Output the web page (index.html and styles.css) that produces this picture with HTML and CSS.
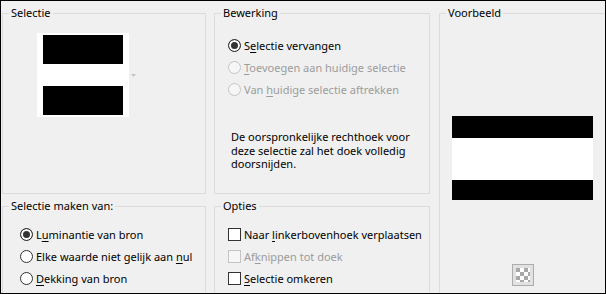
FILE: index.html
```html
<!DOCTYPE html>
<html>
<head>
    <title>Selectie uit masker</title>
    <link rel="stylesheet" href="styles.css">
</head>
<body>
    <div class="dialog">
        <fieldset class="group">
            <legend>Selectie</legend>
            <div class="source">
                <div class="thumb">
                    <div class="bar"></div>
                    <div class="bar"></div>
                </div>
                <svg class="drop" width="5" height="3" viewBox="0 0 5 3"><path d="M0 0h5L2.5 3z" fill="#c4c4c4"/></svg>
            </div>
        </fieldset>

        <fieldset class="group">
            <legend>Bewerking</legend>
            <div class="list list-mode">
                <label class="opt"><input type="radio" name="mode" checked><span>S<u>e</u>lectie vervangen</span></label>
                <label class="opt off"><input type="radio" name="mode" disabled><span><u>T</u>oevoegen aan huidige selectie</span></label>
                <label class="opt off"><input type="radio" name="mode" disabled><span>Van <u>h</u>uidige selectie aftrekken</span></label>
            </div>
            <p class="note">De oorspronkelijke rechthoek voor deze selectie zal het doek volledig doorsnijden.</p>
        </fieldset>

        <fieldset class="group preview">
            <legend>Voorbeeld</legend>
            <div class="preview-body">
                <div class="preview-img">
                    <div class="stripe top"></div>
                    <div class="stripe mid"></div>
                    <div class="stripe bottom"></div>
                </div>
                <div class="checker-btn"><div class="checker"></div></div>
            </div>
        </fieldset>

        <fieldset class="group">
            <legend>Selectie maken van:</legend>
            <div class="list list-from">
                <label class="opt"><input type="radio" name="from" checked><span>L<u>u</u>minantie van bron</span></label>
                <label class="opt"><input type="radio" name="from"><span>Elke waarde niet gelijk aan <u>n</u>ul</span></label>
                <label class="opt"><input type="radio" name="from"><span><u>D</u>ekking van bron</span></label>
            </div>
        </fieldset>

        <fieldset class="group">
            <legend>Opties</legend>
            <div class="list list-opts">
                <label class="opt"><input type="checkbox"><span>Naar <u>l</u>inkerbovenhoek verplaatsen</span></label>
                <label class="opt off"><input type="checkbox" disabled><span>Af<u>k</u>nippen tot doek</span></label>
                <label class="opt"><input type="checkbox"><span><u>S</u>electie omkeren</span></label>
            </div>
        </fieldset>
    </div>
</body>
</html>
```

FILE: styles.css
```css
body {
    margin: 0;
    font-family: "Noto Sans", "DejaVu Sans", sans-serif;
    font-size: 11px;
    color: #000;
}

.dialog {
    width: 606px;
    height: 294px;
    box-sizing: border-box;
    border: 1px solid #000;
    background: #f0f0f0;
    padding: 4px 0 0 1px;
    display: grid;
    grid-template-columns: 204px 216px 180px;
    grid-template-rows: 189px 110px;
    column-gap: 8px;
    row-gap: 4px;
    overflow: hidden;
}

.group {
    margin: 0;
    padding: 0;
    min-width: 0;
    border: 1px solid #dcdcdc;
    box-sizing: border-box;
}

.group legend {
    margin-left: 6px;
    padding: 0 2px;
    line-height: 16px;
}

.preview {
    grid-column: 3;
    grid-row: 1 / span 2;
    margin-left: 1px;
}

/* bron miniatuur */
.source {
    display: flex;
    align-items: center;
    gap: 2px;
    padding: 12px 0 0 34px;
}

.thumb {
    width: 92px;
    height: 84px;
    box-sizing: border-box;
    padding: 2px 6px;
    background: #fff;
    display: flex;
    flex-direction: column;
    justify-content: space-between;
}

.thumb .bar {
    height: 29px;
    background: #000;
}

/* keuzelijsten */
.list {
    display: flex;
    flex-direction: column;
}

.list-mode {
    padding: 13px 0 0 13px;
}

.list-from {
    padding: 9px 0 0 17px;
}

.list-opts {
    padding: 9px 0 0 13px;
}

.opt {
    display: flex;
    align-items: center;
    height: 22px;
    white-space: nowrap;
}

.opt u {
    text-underline-offset: 2px;
}

.opt.off {
    color: #9c9c9c;
}

.opt input {
    appearance: none;
    -webkit-appearance: none;
    margin: 0 3px 0 0;
    width: 13px;
    height: 13px;
    box-sizing: border-box;
    border: 1px solid #333;
    background: #fff;
    flex: none;
}

.opt input[type="radio"] {
    border-radius: 50%;
}

.opt input[type="radio"]:checked {
    background: #333;
    box-shadow: inset 0 0 0 2px #fff;
}

.opt input:disabled {
    border-color: #c4c4c4;
    background: #f6f6f6;
}

.note {
    margin: 30px 0 0 16px;
    width: 192px;
    line-height: 13.5px;
}

/* voorbeeld */
.preview-body {
    padding: 95px 0 0 12px;
    width: 141px;
    display: flex;
    flex-direction: column;
    align-items: center;
}

.preview-img {
    width: 141px;
}

.stripe.top {
    height: 22px;
    background: #000;
}

.stripe.mid {
    height: 42px;
    background: #fff;
}

.stripe.bottom {
    height: 20px;
    background: #000;
}

.checker-btn {
    margin-top: 64px;
    width: 22px;
    height: 22px;
    box-sizing: border-box;
    border: 1px solid #adadad;
    background: #e1e1e1;
    padding: 3px;
}

.checker {
    width: 14px;
    height: 14px;
    background: conic-gradient(#fff 25%, #a8a8a8 0 50%, #fff 0 75%, #a8a8a8 0) 0 0 / 8px 8px;
}
```
